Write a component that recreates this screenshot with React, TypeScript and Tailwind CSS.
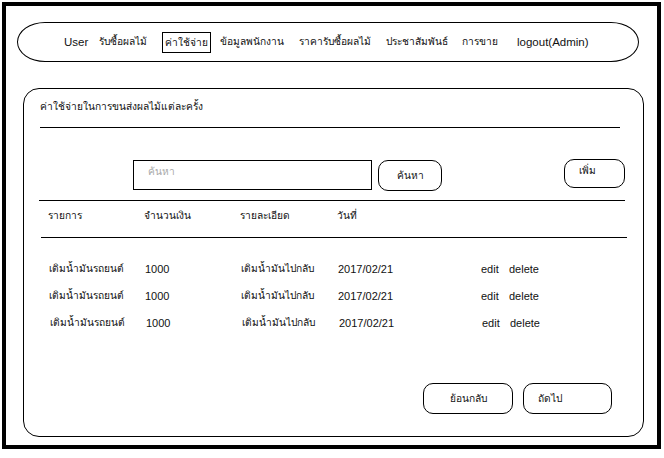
import React from "react";

const rows = [0, 1, 2];

export default function App() {
  return (
    <div
      className="w-[664px] h-[458px] bg-white pt-[2px] pl-[2px] text-[#111] text-[10.2px]"
      style={{ fontFamily: "Tahoma, 'Liberation Sans', 'DejaVu Sans', sans-serif" }}
    >
      <div className="w-[659px] h-[447px] border-4 border-black flex flex-col">
        <nav className="mt-[16px] ml-[11px] w-[622px] h-[40px] border border-black rounded-[28px/20px] flex items-center pl-[46px] leading-[16px]">
          <span className="w-[35px] text-[11.5px]">User</span>
          <span className="w-[63px]">รับซื้อผลไม้</span>
          <span className="w-[58px]">
            <span className="inline-block border border-black px-[2px] h-[21px] leading-[19px]">ค่าใช้จ่าย</span>
          </span>
          <span className="w-[79px]">ข้อมูลพนักงาน</span>
          <span className="w-[87px]">ราคารับซื้อผลไม้</span>
          <span className="w-[76px]">ประชาสัมพันธ์</span>
          <span className="w-[55px]">การขาย</span>
          <span className="text-[11.5px]">logout(Admin)</span>
        </nav>

        <section className="mt-[26px] ml-[17px] w-[621px] h-[349px] border border-black rounded-[16px] flex flex-col leading-[16px]">
          <div className="ml-[16px] mt-[10px] h-[16px]">ค่าใช้จ่ายในการขนส่งผลไม้แต่ละครั้ง</div>
          <div className="ml-[16px] mt-[12px] w-[580px] h-[1px] bg-black" />

          <div className="mt-[31px] flex items-start h-[32px]">
            <div className="ml-[109px] mt-[1px] w-[239px] h-[30px] border border-black pl-[14px] pt-[3px] text-[#a8a8a8]">
              ค้นหา
            </div>
            <div className="ml-[6px] mt-[1px] w-[64px] h-[31px] border border-black rounded-[10px] flex items-center justify-center">
              ค้นหา
            </div>
            <div className="ml-[122px] w-[61px] h-[29px] border border-black rounded-[10px] pl-[14px] pt-[3px]">
              เพิ่ม
            </div>
          </div>

          <div className="ml-[15px] mt-[9px] w-[586px] h-[1px] bg-black" />

          <div className="mt-[7px] h-[16px] flex">
            <span className="ml-[24px] w-[96px]">รายการ</span>
            <span className="w-[96px]">จำนวนเงิน</span>
            <span className="w-[97px]">รายละเอียด</span>
            <span>วันที่</span>
          </div>

          <div className="ml-[17px] mt-[13px] w-[586px] h-[1px] bg-black" />

          <div className="mt-[23px] flex flex-col gap-[11px]">
            {rows.map((i) => (
              <div key={i} className={"h-[16px] flex items-center " + (i === 2 ? "ml-[26px]" : "ml-[25px]")}>
                <span className="w-[96px]">เติมน้ำมันรถยนต์</span>
                <span className="w-[96px] text-[11px]">1000</span>
                <span className="w-[97px]">เติมน้ำมันไปกลับ</span>
                <span className="w-[143px] text-[11px]">2017/02/21</span>
                <span className="w-[28px] text-[11px]">edit</span>
                <span className="text-[11px]">delete</span>
              </div>
            ))}
          </div>

          <div className="mt-[52px] flex">
            <div className="ml-[399px] w-[90px] h-[31px] border border-black rounded-[10px] flex items-center justify-center">
              ย้อนกลับ
            </div>
            <div className="ml-[10px] w-[89px] h-[31px] border border-black rounded-[10px] flex items-center pl-[14px]">
              ถัดไป
            </div>
          </div>
        </section>
      </div>
    </div>
  );
}
